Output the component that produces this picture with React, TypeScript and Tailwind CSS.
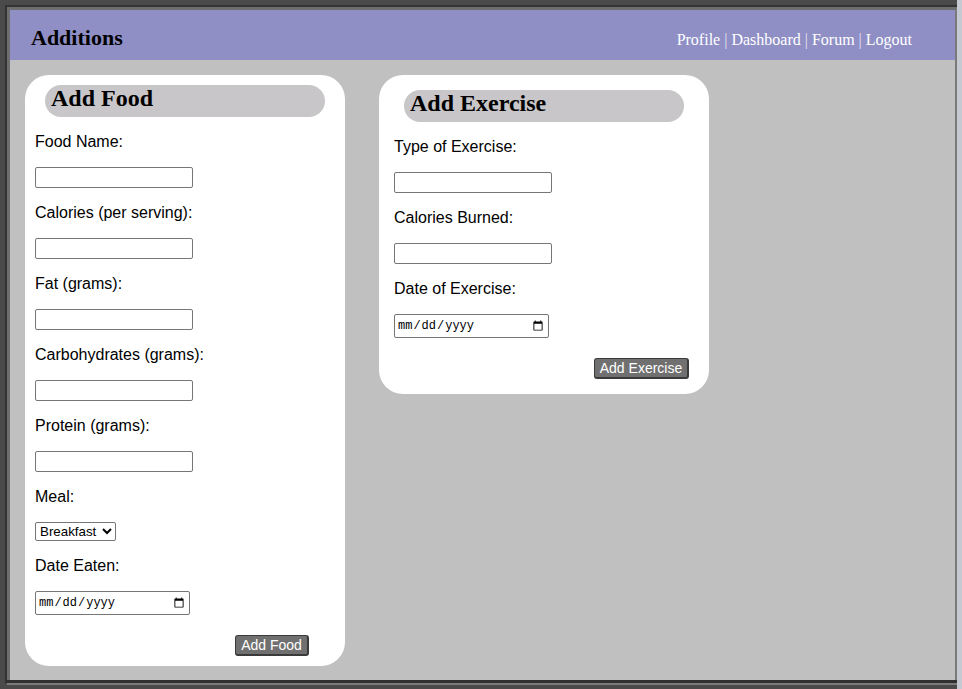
const serif = { fontFamily: '"Liberation Serif", "Times New Roman", serif' };

const foodFields = [
  'Food Name:',
  'Calories (per serving):',
  'Fat (grams):',
  'Carbohydrates (grams):',
  'Protein (grams):',
];

const exerciseFields = ['Type of Exercise:', 'Calories Burned:'];

function Label({ text }: { text: string }) {
  return <label className="mt-[16px] block h-[18px] text-[16px] leading-[18px] text-black">{text}</label>;
}

function TextBox() {
  return (
    <input
      type="text"
      className="mt-[16px] block h-[21px] w-[158px] rounded-[2px] border border-[#767676] bg-white px-[2px] text-[13px]"
    />
  );
}

function DateBox() {
  return (
    <input
      type="date"
      className="mt-[16px] block h-[24px] w-[155px] rounded-[2px] border border-[#767676] bg-white px-[2px] font-['Liberation_Mono',monospace] text-[12px] text-black"
    />
  );
}

function Pill({ title, className }: { title: string; className: string }) {
  return (
    <div className={`h-[32px] w-[280px] rounded-full bg-[#c8c6c8] pl-[6px] ${className}`}>
      <h2 className="text-[24px] font-bold leading-[26px] text-black" style={serif}>
        {title}
      </h2>
    </div>
  );
}

function SubmitButton({ text, className }: { text: string; className: string }) {
  return (
    <button
      className={`mt-[20px] flex h-[21px] items-center justify-center self-end rounded-[3px] border border-r-2 border-b-2 border-[#3a3a3a] bg-[#707070] text-[14px] leading-none text-white ${className}`}
    >
      {text}
    </button>
  );
}

export default function App() {
  return (
    <div className="flex h-[689px] w-[962px] overflow-hidden bg-[#4a4a4a] font-['Liberation_Sans',Arial,sans-serif]">
      <div className="flex w-[957px] flex-col pl-[5px] pt-[5px]">
        {/* window frame */}
        <div className="flex h-[678px] w-[952px] flex-col border-t-2 border-l-2 border-b-[3px] border-t-[#333] border-l-[#333] border-b-[#303030]">
          <div className="flex flex-1 flex-col border-t-[3px] border-l-[3px] border-r-2 border-t-[#6e6e6e] border-l-[#6e6e6e] border-r-[#7a7a7a]">
            {/* header */}
            <header className="flex h-[50px] items-baseline justify-between bg-[#8f8fc6] pl-[21px] pr-[43px] pt-[12px]" style={serif}>
              <h1 className="-mt-[1px] text-[22px] font-bold text-black">Additions</h1>
              <nav className="text-[16px] text-white">
                <a>Profile</a> <span className="text-[#e4e4f0]">|</span> <a>Dashboard</a>{' '}
                <span className="text-[#e4e4f0]">|</span> <a>Forum</a> <span className="text-[#e4e4f0]">|</span>{' '}
                <a>Logout</a>
              </nav>
            </header>

            {/* body */}
            <main className="flex flex-1 items-start gap-[34px] bg-[#c0c0c0] pl-[15px] pt-[15px]">
              {/* food card */}
              <section className="flex w-[320px] flex-col rounded-[24px] bg-white pb-[10px]">
                <Pill title="Add Food" className="ml-[20px] mt-[10px]" />
                <div className="flex flex-col pl-[10px]">
                  {foodFields.map((f) => (
                    <div key={f}>
                      <Label text={f} />
                      <TextBox />
                    </div>
                  ))}
                  <Label text="Meal:" />
                  <select className="mt-[16px] block h-[19px] w-[81px] rounded-[2px] border border-[#767676] bg-white text-[13.333px] text-black">
                    <option>Breakfast</option>
                    <option>Lunch</option>
                    <option>Dinner</option>
                    <option>Snack</option>
                  </select>
                  <Label text="Date Eaten:" />
                  <DateBox />
                  <SubmitButton text="Add Food" className="mr-[36px] w-[74px]" />
                </div>
              </section>

              {/* exercise card */}
              <section className="flex w-[330px] flex-col rounded-[24px] bg-white pb-[15px]">
                <Pill title="Add Exercise" className="ml-[25px] mt-[15px]" />
                <div className="flex flex-col pl-[15px]">
                  {exerciseFields.map((f) => (
                    <div key={f}>
                      <Label text={f} />
                      <TextBox />
                    </div>
                  ))}
                  <Label text="Date of Exercise:" />
                  <DateBox />
                  <SubmitButton text="Add Exercise" className="mr-[20px] w-[95px]" />
                </div>
              </section>
            </main>
          </div>
        </div>
        <div className="ml-[2px] h-[2px] bg-[#7a7a7a]" />
      </div>
      <div className="h-full w-[5px] bg-[#c5c9d1]" />
    </div>
  );
}
